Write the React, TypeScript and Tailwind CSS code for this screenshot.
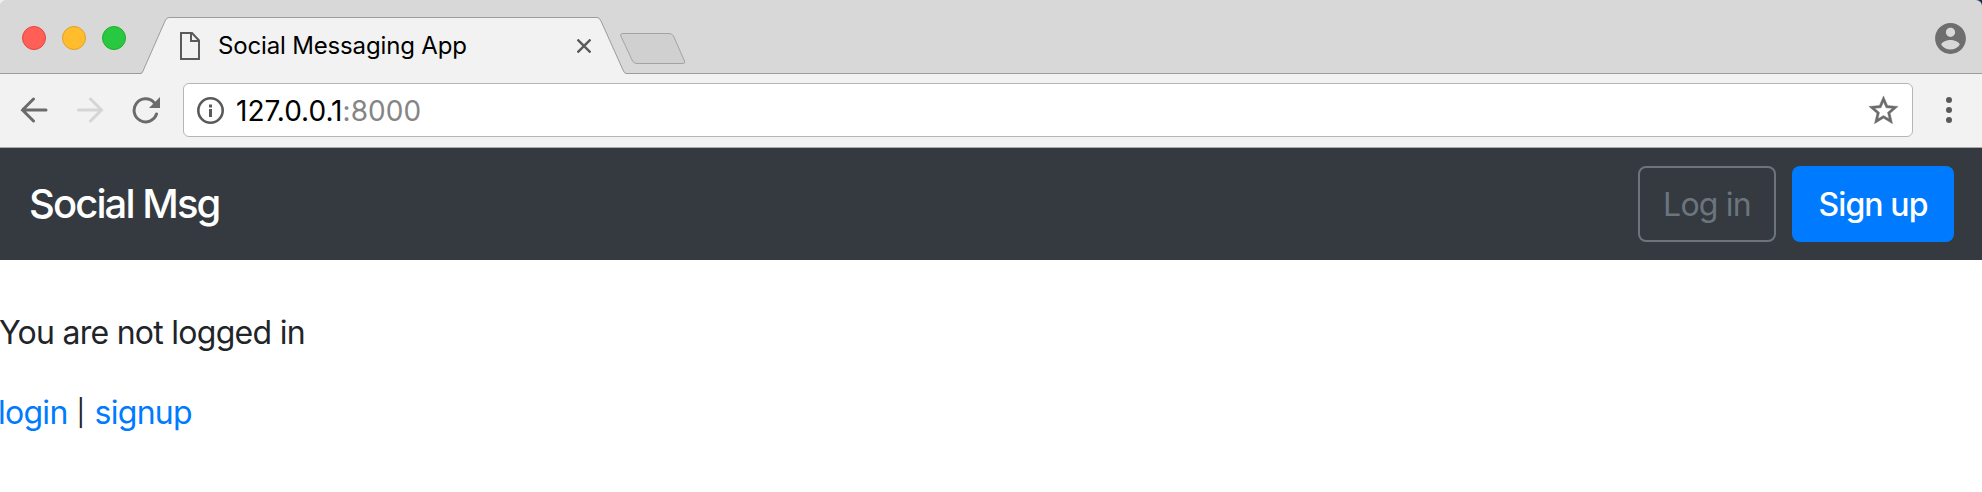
function TabStrip() {
  return (
    <div className="flex h-[74px] items-stretch rounded-t-[6px] bg-[#d8d8d8] shadow-[inset_0_-1px_0_#9c9c9c]">
      <div className="flex items-center gap-4 pl-[22px] pt-[2px]">
        <span className="size-6 rounded-full border border-[#e2463f] bg-[#ff5f57]" />
        <span className="size-6 rounded-full border border-[#e0a123] bg-[#ffbd2e]" />
        <span className="size-6 rounded-full border border-[#1dad2b] bg-[#28c940]" />
      </div>
      <div className="relative ml-[14px] w-[488px]">
        <svg className="absolute inset-0" width="488" height="74" viewBox="0 0 488 74" fill="none">
          <path
            d="M1 74 L1 73.5 Q2 73.500 3 71 L25 21 Q26.5 17.5 29 17.5 H457 Q459.500 17.500 461 21 L483 70 Q484.500 73.500 486 73.500 L487 74 V75 H1Z"
            fill="#f2f2f2"
            stroke="#9c9c9c"
          />
        </svg>
        <div className="relative flex h-full items-center pl-[40px] pt-[18px]">
          <svg width="20" height="28" viewBox="0 0 20 28" fill="none" stroke="#5a5a5a" strokeWidth="2">
            <path d="M1 1H12L19 8.500V27H1Z" />
            <path d="M11 1V9H19" />
          </svg>
          <span className="ml-[18px] whitespace-nowrap text-2xl tracking-[-0.16px] text-black">Social Messaging App</span>
          <svg className="ml-auto mr-[37px]" width="14" height="14" viewBox="0 0 14 14" stroke="#5a5a5a" strokeWidth="2.4">
            <path d="M0.500 0.500L13.500 13.500M13.500 0.500L0.500 13.500" />
          </svg>
        </div>
      </div>
      <svg className="-ml-2 mt-[33px]" width="66" height="32" viewBox="0 0 66 32" fill="#d0d0d0" stroke="#a3a3a3">
        <path d="M2.500 0.500H49Q52 0.500 53.500 3L64.500 28Q65.500 30.500 63 30.500H17Q14 30.500 12.500 28L0.800 3Q0 0.500 2.500 0.500Z" />
      </svg>
      <svg className="ml-auto mr-[13px] mt-5" width="37" height="37" viewBox="0 0 24 24" fill="#6e6e6e">
        <path d="M12 2C6.480 2 2 6.480 2 12s4.480 10 10 10 10-4.480 10-10S17.520 2 12 2zm0 3c1.660 0 3 1.340 3 3s-1.340 3-3 3-3-1.340-3-3 1.340-3 3-3zm0 14.200c-2.500 0-4.710-1.280-6-3.220.03-1.990 4-3.080 6-3.080 1.990 0 5.970 1.090 6 3.080-1.290 1.940-3.500 3.220-6 3.220z" />
      </svg>
    </div>
  );
}

function Toolbar() {
  return (
    <div className="flex h-[74px] items-center border-b border-[#a9a9a9] bg-[#f2f2f2] pb-px pl-5">
      <svg width="28" height="26" viewBox="0 0 28 26" fill="none" stroke="#6b6b6b" strokeWidth="3" strokeLinecap="round">
        <path d="M13.500 2L2.500 13L13.500 24M2.500 13H26" />
      </svg>
      <svg className="ml-7" width="28" height="26" viewBox="0 0 28 26" fill="none" stroke="#d5d5d5" strokeWidth="3" strokeLinecap="round">
        <path d="M14.500 2L25.500 13L14.500 24M25.500 13H2.500" />
      </svg>
      <svg className="ml-7 mr-px" width="28" height="28" viewBox="0 0 28 28" fill="none">
        <path d="M22 6.500A11.500 11.500 0 1 0 24.500 18" stroke="#6b6b6b" strokeWidth="3" strokeLinecap="round" />
        <path d="M28 1V12H17Z" fill="#6b6b6b" />
      </svg>
      <div className="ml-[22px] flex h-[54px] w-[1730px] items-center rounded-md border border-[#b5b5b5] bg-white pl-[13px] pr-[11px]">
        <svg width="28" height="28" viewBox="0 0 28 28" fill="none">
          <circle cx="13.500" cy="14.500" r="12.200" stroke="#5a5a5a" strokeWidth="2.600" />
          <path d="M12 8.500H15V11.500H12ZM12 13H15V21H12Z" fill="#5a5a5a" />
        </svg>
        <span className="ml-[11px] whitespace-nowrap pt-0.5 text-[28px] text-black">
          127.0.0.1<span className="tracking-[0.1px] text-[#858585]">:8000</span>
        </span>
        <svg className="ml-auto" width="35" height="35" viewBox="0 0 24 24" fill="#6b6b6b" stroke="#6b6b6b" strokeWidth="0.3">
          <path d="M22 9.240l-7.190-.62L12 2 9.190 8.630 2 9.240l5.460 4.730L5.820 21 12 17.270 18.180 21l-1.630-7.030L22 9.240zM12 15.400l-3.760 2.270 1-4.280-3.320-2.880 4.380-.38L12 6.100l1.710 4.040 4.380.38-3.320 2.880 1 4.280L12 15.400z" />
        </svg>
      </div>
      <svg className="ml-[33px]" width="6" height="26" viewBox="0 0 6 26" fill="#5a5a5a">
        <circle cx="3" cy="3" r="3" />
        <circle cx="3" cy="13" r="3" />
        <circle cx="3" cy="23" r="3" />
      </svg>
    </div>
  );
}

export default function App() {
  return (
    <div className="h-[492px] w-[1982px] overflow-hidden bg-white font-['Inter',sans-serif] text-[#212529]">
      <div className="bg-linear-to-r from-[#eef0f2] from-50% to-[#16304c] to-50%">
        <TabStrip />
      </div>
      <Toolbar />
      <nav className="flex h-28 items-center justify-between bg-[#343a40] px-7">
        <a className="ml-px text-[40px] font-medium leading-[60px] tracking-[-1.9px] text-white">Social Msg</a>
        <div className="flex gap-4">
          <button className="h-[76px] w-[138px] rounded-lg border-2 border-[#6c757d] pt-0.5 text-[32px] tracking-[-0.8px] text-[#6c757d]">
            Log in
          </button>
          <button className="h-[76px] w-[162px] rounded-lg bg-[#007bff] pt-0.5 text-[32px] font-medium tracking-[-0.9px] text-white">
            Sign up
          </button>
        </div>
      </nav>
      <main className="pt-[49px] text-[32px] leading-[48px] tracking-[-0.73px]">
        <p className="-ml-px">You are not logged in</p>
        <p className="-ml-[2px] mt-8 flex items-center">
          <a className="text-[#007bff]">login</a>
          <span className="ml-[9px] mr-[10px] text-[26px]">|</span>
          <a className="tracking-[-0.7px] text-[#007bff]">signup</a>
        </p>
      </main>
    </div>
  );
}
